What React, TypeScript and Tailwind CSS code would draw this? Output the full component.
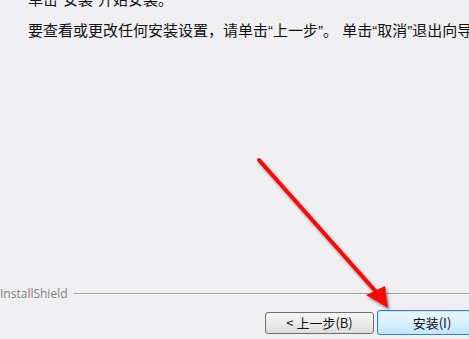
function Q({ children }: { children: string }) {
  return <span className="font-['Liberation_Sans',sans-serif]">{children}</span>
}

export default function App() {
  return (
    <div className="relative flex h-[339px] w-[469px] flex-col overflow-hidden bg-[#f0eff2] font-['Noto_Sans_CJK_SC',sans-serif] text-[#111]">
      <div className="-mt-[11px] pl-[28px] text-[15px] leading-[20px] whitespace-nowrap">
        <p>
          单击<Q>“</Q>安装<Q>”</Q>开始安装。
        </p>
        <p className="mt-[10px]">
          要查看或更改任何安装设置，请单击<Q>“</Q>上一步<Q>”</Q>。<Q> </Q>单击<Q>“</Q>取消<Q>”</Q>退出向导。
        </p>
      </div>

      <div className="flex-1" />

      <div className="flex items-center gap-[6px]">
        <span className="font-['Open_Sans',sans-serif] text-[12px] leading-[12px] text-[#7f7f7f]">
          InstallShield
        </span>
        <div className="flex-1 border-t border-b border-t-[#a0a0a0] border-b-[#fbfbfb]" />
      </div>

      <div className="mt-[10px] mb-[4px] flex items-center justify-end gap-[3px] -mr-[18px]">
        <button
          type="button"
          className="flex h-[22px] w-[109px] items-center justify-center rounded-[3px] border border-[#707070] bg-gradient-to-b from-[#f4f4f4] via-[#ececec] to-[#dcdcdc] text-[13px] text-[#111]"
        >
          &lt; 上一步(B)
        </button>
        <button
          type="button"
          className="flex h-[25px] w-[110px] items-center justify-center rounded-[3px] border border-[#3c7fb1] bg-gradient-to-b from-[#eaf6fd] via-[#d9f0fc] to-[#bee6fd] text-[13px] text-[#111] shadow-[inset_0_0_0_1px_#c8e6f8]"
        >
          安装(I)
        </button>
      </div>

      <svg
        className="pointer-events-none absolute left-0 top-0"
        width="469"
        height="339"
        viewBox="0 0 469 339"
      >
        <defs>
          <filter id="sh" x="-20%" y="-20%" width="140%" height="140%">
            <feDropShadow dx="1.5" dy="2" stdDeviation="1.5" floodColor="#000" floodOpacity="0.45" />
          </filter>
        </defs>
        <g filter="url(#sh)">
          <line x1="259" y1="160" x2="378" y2="294" stroke="#f20d0d" strokeWidth="4" strokeLinecap="round" />
          <polygon points="388,308 366,295 385,286" fill="#f20d0d" />
        </g>
      </svg>
    </div>
  )
}
